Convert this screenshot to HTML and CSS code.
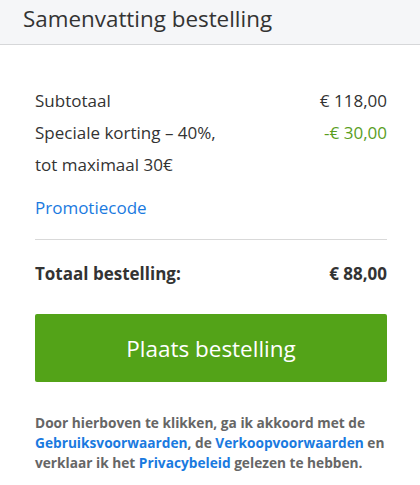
FILE: index.html
```html
<!DOCTYPE html>
<html lang="nl">
<head>
<meta charset="utf-8">
<link rel="stylesheet" href="styles.css">
</head>
<body>
<div class="summary">
  <div class="summary-header">
    <h2 class="summary-title">Samenvatting bestelling</h2>
  </div>
  <div class="summary-body">
    <div class="row">
      <span>Subtotaal</span>
      <span>€ 118,00</span>
    </div>
    <div class="row">
      <span>Speciale korting – 40%,<br>tot maximaal 30€</span>
      <span class="discount">-€ 30,00</span>
    </div>
    <a class="promo" href="#">Promotiecode</a>
    <hr class="divider">
    <div class="row total">
      <span>Totaal bestelling:</span>
      <span>€ 88,00</span>
    </div>
    <button class="order-btn" type="button">Plaats bestelling</button>
    <p class="legal">Door hierboven te klikken, ga ik akkoord met de <a href="#">Gebruiksvoorwaarden</a>, de <a href="#">Verkoopvoorwaarden</a> en verklaar ik het <a href="#">Privacybeleid</a> gelezen te hebben.</p>
  </div>
</div>
</body>
</html>
```

FILE: styles.css
```css
* { box-sizing: border-box; }
html, body { margin: 0; padding: 0; background: #fff; }
body {
  font-family: "Open Sans", "Liberation Sans", sans-serif;
  color: #333;
}
.summary-header {
  background: #f5f6f8;
  border-bottom: 1px solid #d6d7d9;
  height: 45px;
  padding: 0 23px;
  display: flex;
  align-items: center;
}
.summary-title {
  margin: 0;
  font-size: 22.4px;
  font-weight: 400;
  color: #333;
  line-height: 1;
  margin-top: -6px;
}
.summary-body {
  padding: 40px 33px 0 35px;
}
.row {
  display: flex;
  justify-content: space-between;
  font-size: 17px;
  line-height: 32px;
}
.discount { color: #5a9e1e; }
.promo {
  display: block;
  margin-top: 11px;
  font-size: 17px;
  line-height: 32px;
  color: #1a7ae0;
  text-decoration: none;
}
.divider {
  margin: 15px 0 0;
  border: 0;
  border-top: 1px solid #d9d9d9;
  height: 0;
}
.row.total {
  margin-top: 18px;
  font-weight: 700;
}
.order-btn {
  display: block;
  width: 100%;
  margin-top: 24px;
  height: 68px;
  border: 0;
  border-radius: 2px;
  background: #53a318;
  color: #fff;
  font-family: inherit;
  font-size: 22.5px;
  font-weight: 400;
}
.legal {
  margin: 31px 0 0;
  font-size: 13.7px;
  line-height: 20px;
  font-weight: 700;
  color: #666;
}
.legal a {
  color: #1a7ae0;
  text-decoration: none;
}
```
